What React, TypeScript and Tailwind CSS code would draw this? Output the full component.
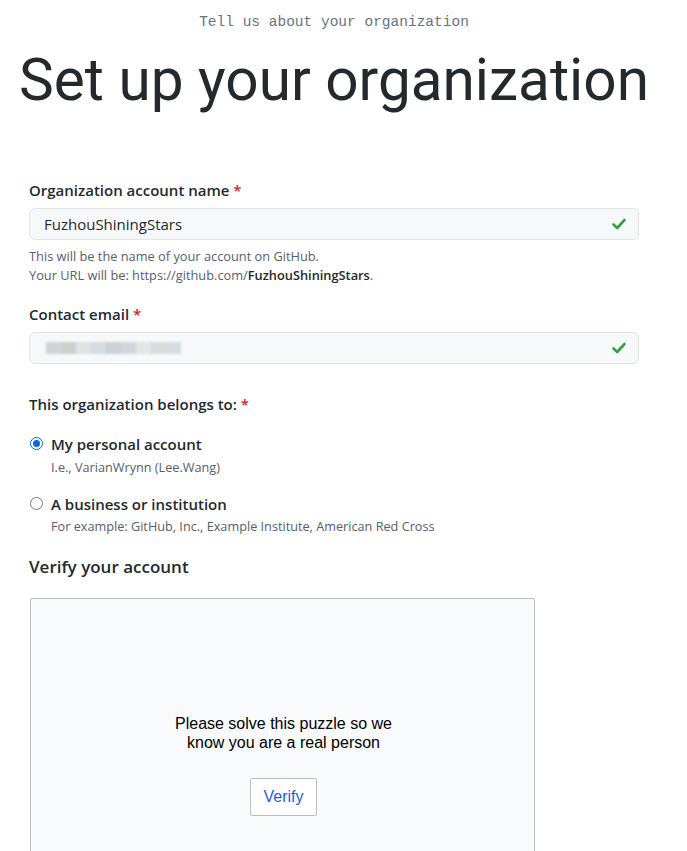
import React from "react";

const ui = { fontFamily: '"Open Sans", "Noto Sans", sans-serif' };

function Check() {
  return (
    <svg width="18" height="18" viewBox="0 0 18 18" className="absolute right-[10px] top-[6px]">
      <path d="M3.5 9.5 L7.2 13 L14.5 5" fill="none" stroke="#34a244" strokeWidth="2.6" strokeLinecap="round" strokeLinejoin="round" />
    </svg>
  );
}

function Label({ children }: { children: React.ReactNode }) {
  return (
    <div className="text-[15px] font-semibold text-[#24292e] leading-[20px]" style={ui}>
      {children} <span className="text-[#cb2431]">*</span>
    </div>
  );
}

export default function App() {
  return (
    <div className="w-[668px] bg-white min-h-[851px]">
      <div className="pt-[12px] text-center text-[14.5px] text-[#6a737d] leading-[20px]" style={{ fontFamily: '"Liberation Mono", monospace' }}>
        Tell us about your organization
      </div>
      <h1 className="text-center text-[58.5px] leading-[72px] text-[#24292e] mt-[12px]" style={{ fontFamily: 'Roboto, sans-serif' }}>
        Set up your organization
      </h1>
      <div className="px-[29px] mt-[64px]">
        <Label>Organization account name</Label>
        <div className="relative mt-[8px] h-[32px] rounded-[6px] border border-[#e1e4e8] bg-[#f6f8fa] flex items-center pl-[14px]">
          <span className="text-[15px] text-[#24292e]" style={ui}>FuzhouShiningStars</span>
          <Check />
        </div>
        <div className="mt-[7px] text-[12.8px] leading-[19px] text-[#586069]" style={ui}>
          <div>This will be the name of your account on GitHub.</div>
          <div>
            Your URL will be: https://github.com/<span className="font-semibold text-[#24292e]">FuzhouShiningStars</span>.
          </div>
        </div>

        <div className="mt-[19px]">
          <Label>Contact email</Label>
        </div>
        <div className="relative mt-[8px] h-[32px] rounded-[6px] border border-[#e1e4e8] bg-[#f6f8fa] flex items-center pl-[16px]">
          <div className="flex h-[12px] blur-[1px]">
            <div className="w-[15px] bg-[#d0d4d8]" />
            <div className="w-[15px] bg-[#cfcfcc]" />
            <div className="w-[15px] bg-[#e0e2e4]" />
            <div className="w-[15px] bg-[#d6dbe0]" />
            <div className="w-[15px] bg-[#cdd1d6]" />
            <div className="w-[15px] bg-[#d2d6da]" />
            <div className="w-[15px] bg-[#e2e4e6]" />
            <div className="w-[15px] bg-[#d8dadc]" />
            <div className="w-[15px] bg-[#d6dce2]" />
          </div>
          <Check />
        </div>

        <div className="mt-[30px]">
          <Label>This organization belongs to:</Label>
        </div>

        <div className="mt-[20px] flex items-start">
          <div className="mt-[3px] ml-[1px] w-[13px] h-[13px] rounded-full border-[1.5px] border-[#0969da] bg-white shrink-0 flex items-center justify-center">
            <div className="w-[7px] h-[7px] rounded-full bg-[#0969da]" />
          </div>
          <div className="ml-[8px]" style={ui}>
            <div className="text-[15px] font-semibold text-[#24292e] leading-[20px]">My personal account</div>
            <div className="text-[12.7px] text-[#586069] leading-[18px] mt-[4px]">I.e., VarianWrynn (Lee.Wang)</div>
          </div>
        </div>
        <div className="mt-[18px] flex items-start">
          <div className="mt-[3px] ml-[1px] w-[13px] h-[13px] rounded-full border border-[#767676] bg-white shrink-0" />
          <div className="ml-[8px]" style={ui}>
            <div className="text-[15px] font-semibold text-[#24292e] leading-[20px]">A business or institution</div>
            <div className="text-[12.7px] text-[#586069] leading-[18px] mt-[3px]">For example: GitHub, Inc., Example Institute, American Red Cross</div>
          </div>
        </div>

        <div className="mt-[20px] text-[17px] font-semibold text-[#24292e] leading-[24px]" style={ui}>
          Verify your account
        </div>

        <div className="mt-[19px] ml-[1px] w-[505px] h-[300px] border border-[#bcbcbc] rounded-[2px] bg-[#f9fafb] flex flex-col items-center pt-[115px] pl-[2px]" style={{ fontFamily: '"Liberation Sans", Arial, sans-serif' }}>
          <div className="text-center text-[16px] leading-[19px] text-black">
            Please solve this puzzle so we
            <br />
            know you are a real person
          </div>
          <button className="mt-[26px] w-[67px] h-[38px] border border-[#bdbdbd] rounded-[2px] bg-white text-[16px] text-[#1f5fd6]">
            Verify
          </button>
        </div>
      </div>
    </div>
  );
}
